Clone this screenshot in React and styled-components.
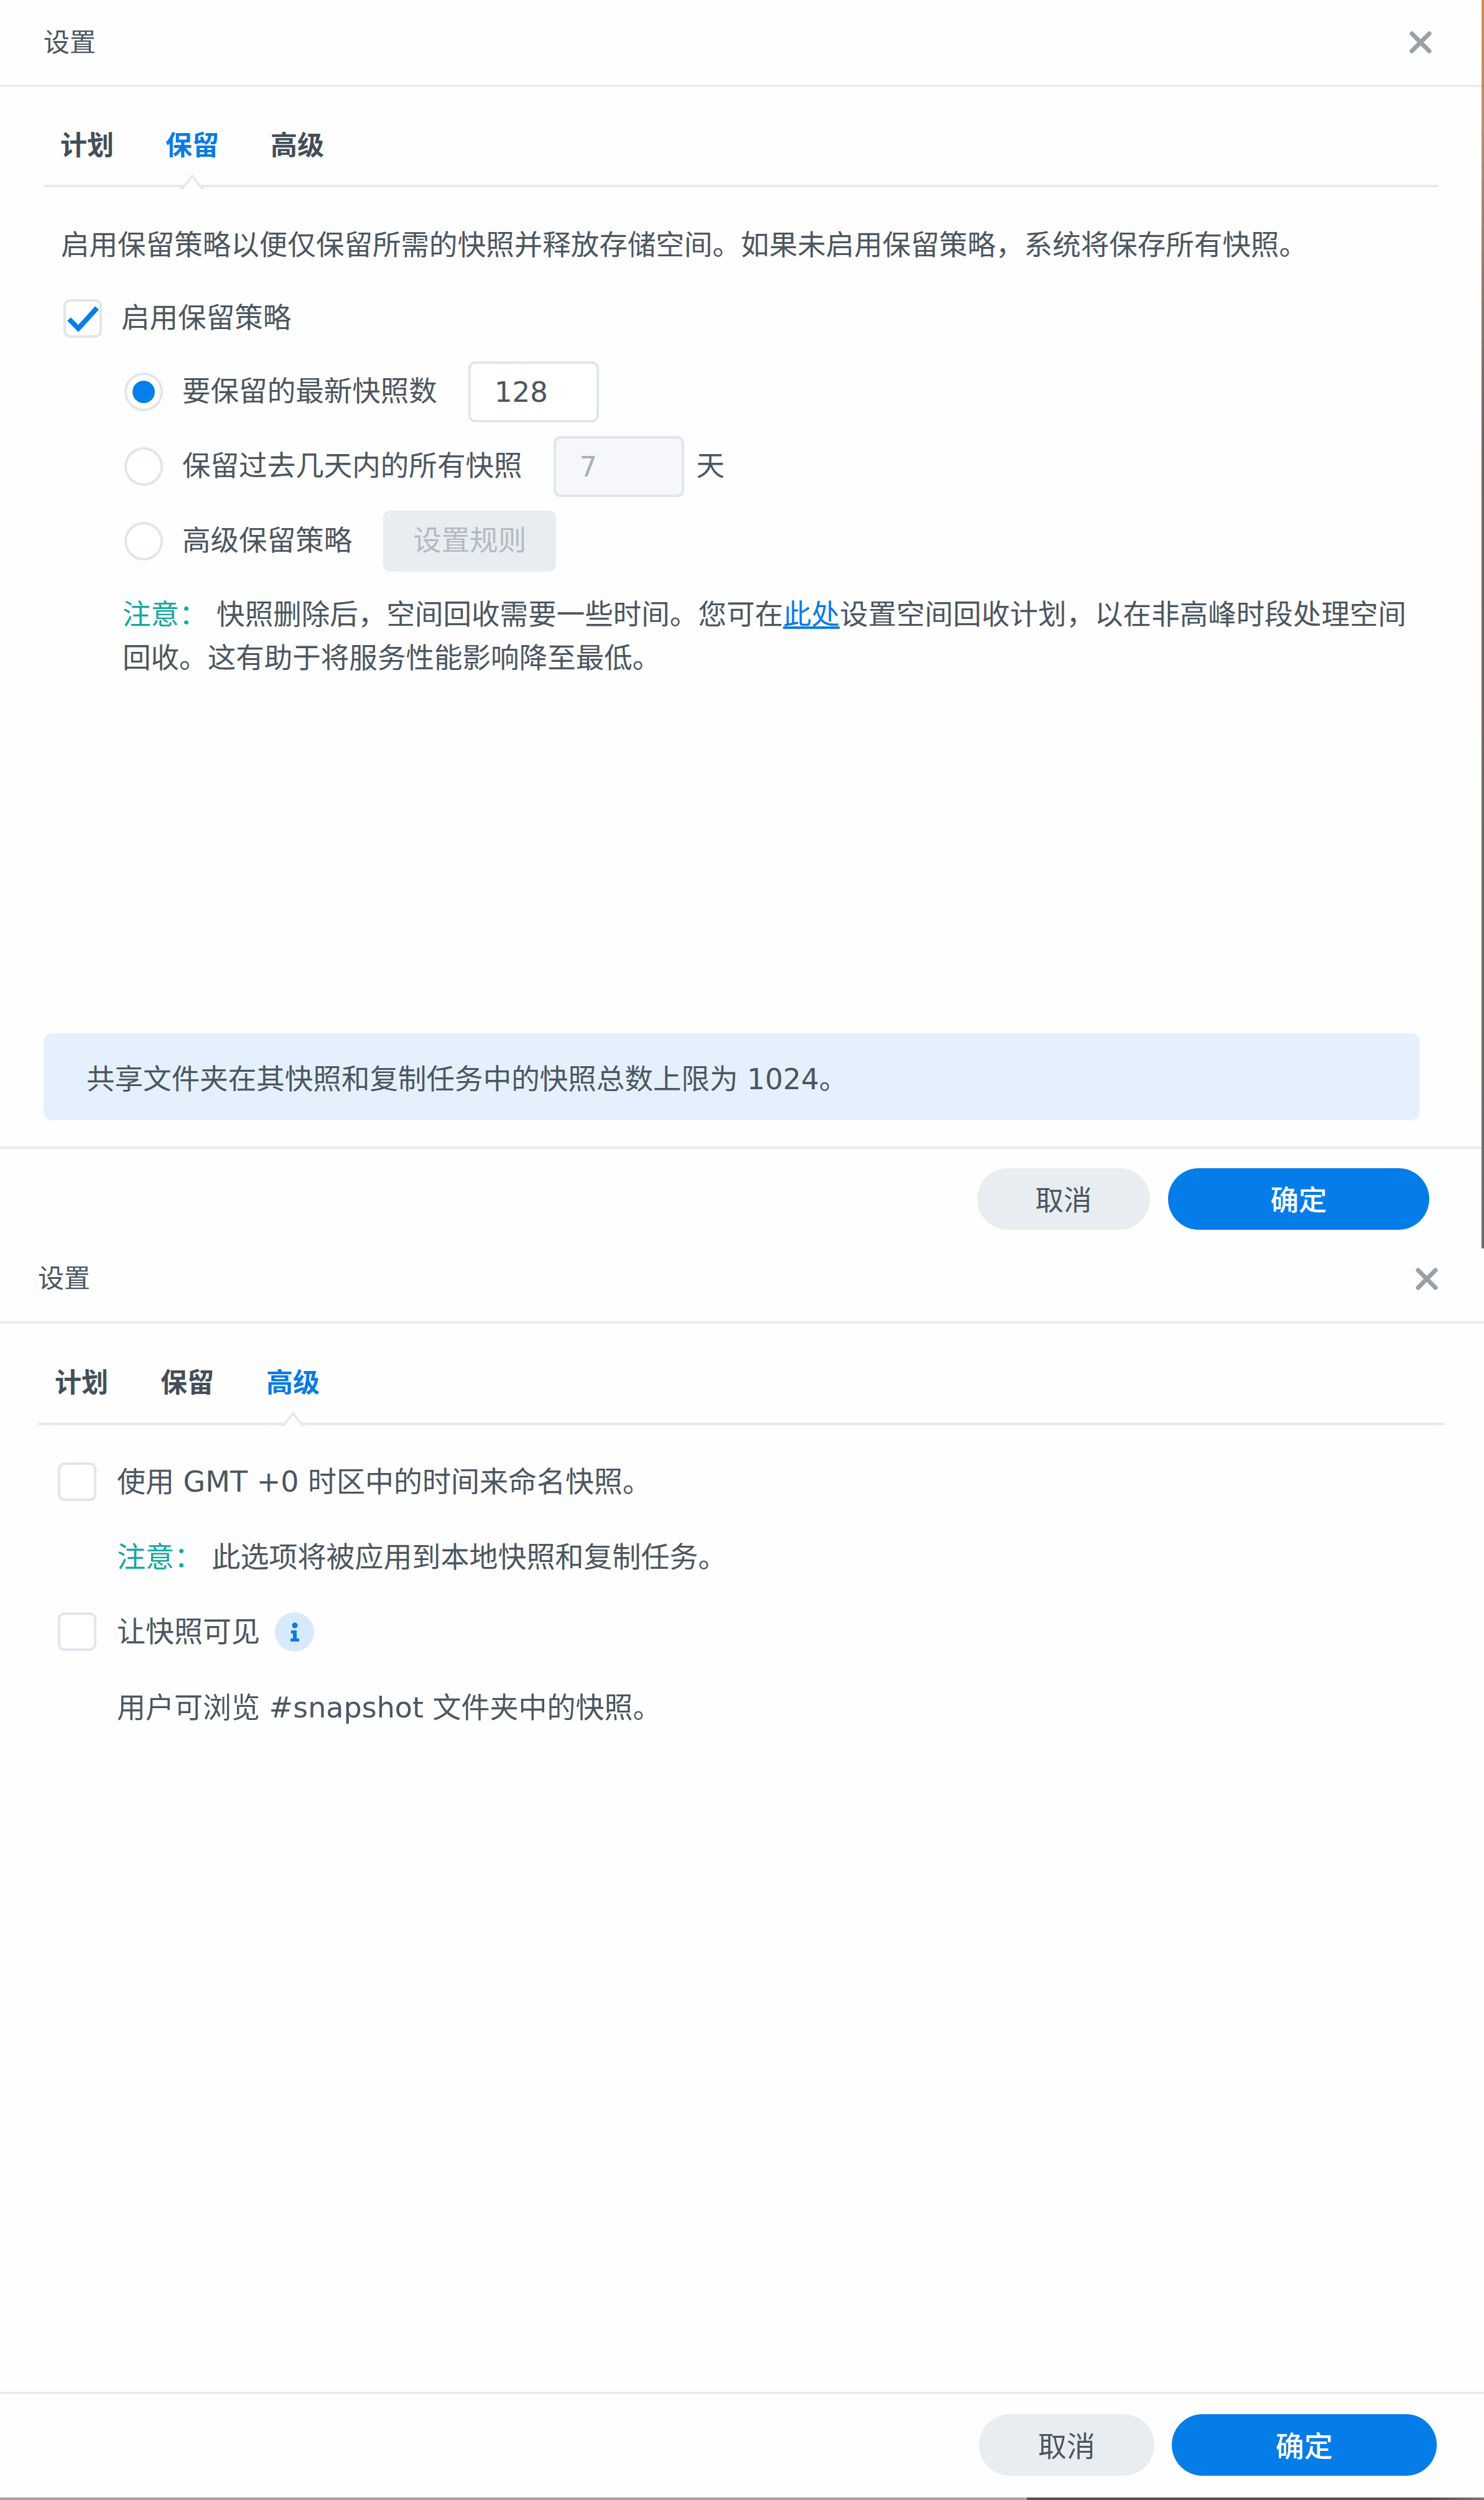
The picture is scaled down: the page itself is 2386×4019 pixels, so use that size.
import React from "react";
import styled, { createGlobalStyle } from "styled-components";

const Global = createGlobalStyle`
  html, body { margin: 0; padding: 0; background: #fff; }
  body {
    font-family: "DejaVu Sans", "Noto Sans CJK SC", sans-serif;
    color: #4b5660;
  }
  * { box-sizing: border-box; }
`;

const Page = styled.div`
  width: 2386px;
  height: 4019px;
  display: flex;
  flex-direction: column;
  overflow: hidden;
  filter: blur(0.7px);
`;

const FirstShot = styled.div`
  height: 2007px;
  display: flex;
  background: linear-gradient(180deg, #d98a4e 0, #b98f73 200px, #6f6664 700px, #6e6c6b 2007px);
`;

const Dialog = styled.section`
  width: ${p => p.$width}px;
  height: ${p => p.$height}px;
  display: flex;
  flex-direction: column;
  font-size: ${p => p.$font}px;
  background: #fefefe;
`;

const Header = styled.header`
  height: ${p => p.$height + 4}px;
  flex: none;
  display: flex;
  align-items: center;
  justify-content: space-between;
  padding: 0 ${p => p.$right}px ${p => p.$cut}px ${p => p.$left}px;
  border-bottom: 4px solid #e8edf2;
`;

const Title = styled.h1`
  margin: ${p => p.$shift || 0}px 0 0;
  font-size: 42px;
  line-height: 60px;
  font-weight: 400;
  color: #4b5660;
`;

const CloseIcon = styled.svg`
  width: 38px;
  height: 38px;
  display: block;
`;

const TabBar = styled.nav`
  flex: none;
  display: flex;
  gap: ${p => p.$gap}px;
  margin: 0 ${p => p.$right}px 0 ${p => p.$left}px;
  padding: ${p => p.$top}px 27px ${p => p.$top - 31}px;
  border-bottom: 4px solid #e3eaf0;
`;

const Tab = styled.span`
  position: relative;
  font-size: 43px;
  width: 86px;
  line-height: 60px;
  font-weight: 700;
  white-space: nowrap;
  color: ${p => (p.$active ? "#0a7be3" : "#434e58")};
`;

const Notch = styled.svg`
  position: absolute;
  left: 24px;
  bottom: ${p => -(p.$drop)}px;
  width: 38px;
  height: 24px;
  display: block;
`;

const Body = styled.div`
  flex: 1;
  min-height: 0;
  display: flex;
  flex-direction: column;
  padding: ${p => p.$top}px 0 0 ${p => p.$left}px;
`;

const Line = styled.p`
  margin: ${p => p.$top || 0}px 0 0 ${p => p.$indent || 0}px;
  line-height: 60px;
  white-space: nowrap;
`;

const CheckRow = styled.div`
  display: flex;
  align-items: center;
  gap: ${p => p.$gap}px;
  margin-top: ${p => p.$top || 0}px;
  height: 62px;
  line-height: 60px;
`;

const CheckBox = styled.span`
  flex: none;
  width: 62px;
  height: 62px;
  border: 4px solid #dfe6ec;
  border-radius: 11px;
  background: #fff;
  display: block;
`;

const CheckMark = styled.svg`
  width: 54px;
  height: 54px;
  display: block;
`;

const InfoBadge = styled.svg`
  width: 63px;
  height: 63px;
  flex: none;
  margin-left: -9px;
  display: block;
`;

const OptionRow = styled.div`
  display: flex;
  align-items: center;
  height: ${p => p.$height}px;
  margin: ${p => p.$top}px 0 0 98px;
  line-height: 60px;
  white-space: nowrap;
`;

const Radio = styled.span`
  flex: none;
  width: 62px;
  height: 62px;
  margin-right: 31px;
  border: 4px solid #dfe6ec;
  border-radius: 50%;
  background: #fff;
  display: flex;
  align-items: center;
  justify-content: center;
  &::after {
    content: "";
    display: ${p => (p.$on ? "block" : "none")};
    width: 36px;
    height: 36px;
    border-radius: 50%;
    background: #057feb;
  }
`;

const NumberField = styled.input`
  width: 210px;
  height: 98px;
  margin-left: ${p => p.$gap}px;
  padding: 0 0 0 38px;
  border: 4px solid #dfe6ec;
  border-radius: 11px;
  outline: none;
  font-family: inherit;
  font-size: 45px;
  color: ${p => (p.disabled ? "#a8b0b7" : "#4b5660")};
  background: ${p => (p.disabled ? "#f5f7fa" : "#fff")};
  opacity: 1;
`;

const Unit = styled.span`
  margin-left: 20px;
`;

const RuleButton = styled.button`
  width: 278px;
  height: 98px;
  margin-left: 50px;
  padding: 0;
  border: 0;
  border-radius: 11px;
  font: inherit;
  color: #b4bac0;
  background: #e8edf2;
`;

const Note = styled.p`
  margin: 35px 0 0 95px;
  max-width: 2100px;
  line-height: 70px;
`;

const NoteLabel = styled.span`
  color: #15a89e;
`;

const NoteLink = styled.a`
  color: #0a7be3;
  text-decoration: underline;
`;

const Alert = styled.div`
  margin: auto 0 42px -32px;
  width: 2213px;
  height: 140px;
  padding-left: 69px;
  display: flex;
  align-items: center;
  border-radius: 14px;
  background: #e4f1fd;
`;

const Footer = styled.footer`
  flex: none;
  height: ${p => p.$height}px;
  display: flex;
  justify-content: flex-end;
  gap: ${p => p.$gap}px;
  padding: ${p => p.$top}px ${p => p.$right}px 0 0;
  border-top: 4px solid #e8edf2;
`;

const Pill = styled.button`
  width: ${p => p.$width}px;
  height: 99px;
  padding: 0 0 3px;
  border: 0;
  border-radius: 50px;
  font: inherit;
  font-weight: ${p => (p.$primary ? 500 : 400)};
  color: ${p => (p.$primary ? "#fff" : "#4b5660")};
  background: ${p => (p.$primary ? "#057de9" : "#e8edf2")};
`;

const BottomStrip = styled.div`
  flex: none;
  height: 4px;
  background: linear-gradient(90deg, #a3a3a3 0, #a3a3a3 1651px, #5a4f50 1651px, #5a4f50 2300px, #777 2386px);
`;

const Close = () => (
  <CloseIcon viewBox="0 0 38 38" aria-hidden="true">
    <path d="M5 5 L33 33 M33 5 L5 33" stroke="#98a1a8" strokeWidth="7" strokeLinecap="round" fill="none" />
  </CloseIcon>
);

const Peak = ({ drop }) => (
  <Notch $drop={drop} viewBox="0 0 38 24" aria-hidden="true">
    <path d="M0 22 L4 22 L19 3 L34 22 L38 22 L38 24 L0 24 Z" fill="#fefefe" />
    <path d="M0 22 L4 22 L19 3 L34 22 L38 22" stroke="#e3eaf0" strokeWidth="4" fill="none" />
  </Notch>
);

const Tabs = ({ active, left, right, gap, top, drop }) => (
  <TabBar $left={left} $right={right} $gap={gap} $top={top}>
    {["计划", "保留", "高级"].map(name => (
      <Tab key={name} $active={name === active}>
        {name}
        {name === active && <Peak drop={drop} />}
      </Tab>
    ))}
  </TabBar>
);

export default function App() {
  return (
    <Page>
      <Global />
      <FirstShot>
        <Dialog $width={2382} $height={2007} $font={45.55}>
          <Header $height={136} $cut={0} $left={70} $right={79}>
            <Title $shift={2}>设置</Title>
            <Close />
          </Header>
          <Tabs active="保留" left={70} right={70} gap={83} top={64} drop={40} />
          <Body $top={64} $left={102}>
            <Line $indent={-4}>启用保留策略以便仅保留所需的快照并释放存储空间。如果未启用保留策略，系统将保存所有快照。</Line>
            <CheckRow $top={56} $gap={31}>
              <CheckBox>
                <CheckMark viewBox="0 0 54 54" aria-hidden="true">
                  <path d="M5 28 L20 43 L50 10" stroke="#057feb" strokeWidth="8" fill="none" />
                </CheckMark>
              </CheckBox>
              启用保留策略
            </CheckRow>
            <OptionRow $height={98} $top={38}>
              <Radio $on />
              要保留的最新快照数
              <NumberField $gap={50} defaultValue="128" readOnly />
            </OptionRow>
            <OptionRow $height={98} $top={22}>
              <Radio />
              保留过去几天内的所有快照
              <NumberField $gap={50} defaultValue="7" disabled />
              <Unit>天</Unit>
            </OptionRow>
            <OptionRow $height={98} $top={22}>
              <Radio />
              高级保留策略
              <RuleButton type="button">设置规则</RuleButton>
            </OptionRow>
            <Note>
              <NoteLabel>注意：</NoteLabel> 快照删除后，空间回收需要一些时间。您可在<NoteLink>此处</NoteLink>设置空间回收计划，以在非高峰时段处理空间回收。这有助于将服务性能影响降至最低。
            </Note>
            <Alert>共享文件夹在其快照和复制任务中的快照总数上限为 1024。</Alert>
          </Body>
          <Footer $height={164} $top={31} $right={84} $gap={29}>
            <Pill type="button" $width={278}>取消</Pill>
            <Pill type="button" $width={420} $primary>确定</Pill>
          </Footer>
        </Dialog>
      </FirstShot>
      <Dialog $width={2386} $height={2008} $font={46}>
        <Header $height={117} $cut={19} $left={61} $right={73}>
          <Title>设置</Title>
          <Close />
        </Header>
        <Tabs active="高级" left={61} right={63} gap={84} top={65} drop={40} />
        <Body $top={60} $left={93}>
          <CheckRow $gap={33}>
            <CheckBox />
            使用 GMT +0 时区中的时间来命名快照。
          </CheckRow>
          <Line $top={60} $indent={95}>
            <NoteLabel>注意：</NoteLabel> 此选项将被应用到本地快照和复制任务。
          </Line>
          <CheckRow $top={59} $gap={33}>
            <CheckBox />
            让快照可见
            <InfoBadge viewBox="0 0 63 63" aria-hidden="true">
              <circle cx="31.5" cy="31.5" r="31.5" fill="#d8e9fb" />
              <circle cx="32" cy="21" r="4.5" fill="#0a7be3" />
              <path d="M26 29 H35 V42 H39 V47 H25 V42 H29 V34 H26 Z" fill="#0a7be3" />
            </InfoBadge>
          </CheckRow>
          <Line $top={61} $indent={95}>用户可浏览 #snapshot 文件夹中的快照。</Line>
        </Body>
        <Footer $height={170} $top={32} $right={76} $gap={28}>
          <Pill type="button" $width={282}>取消</Pill>
          <Pill type="button" $width={426} $primary>确定</Pill>
        </Footer>
      </Dialog>
      <BottomStrip />
    </Page>
  );
}
